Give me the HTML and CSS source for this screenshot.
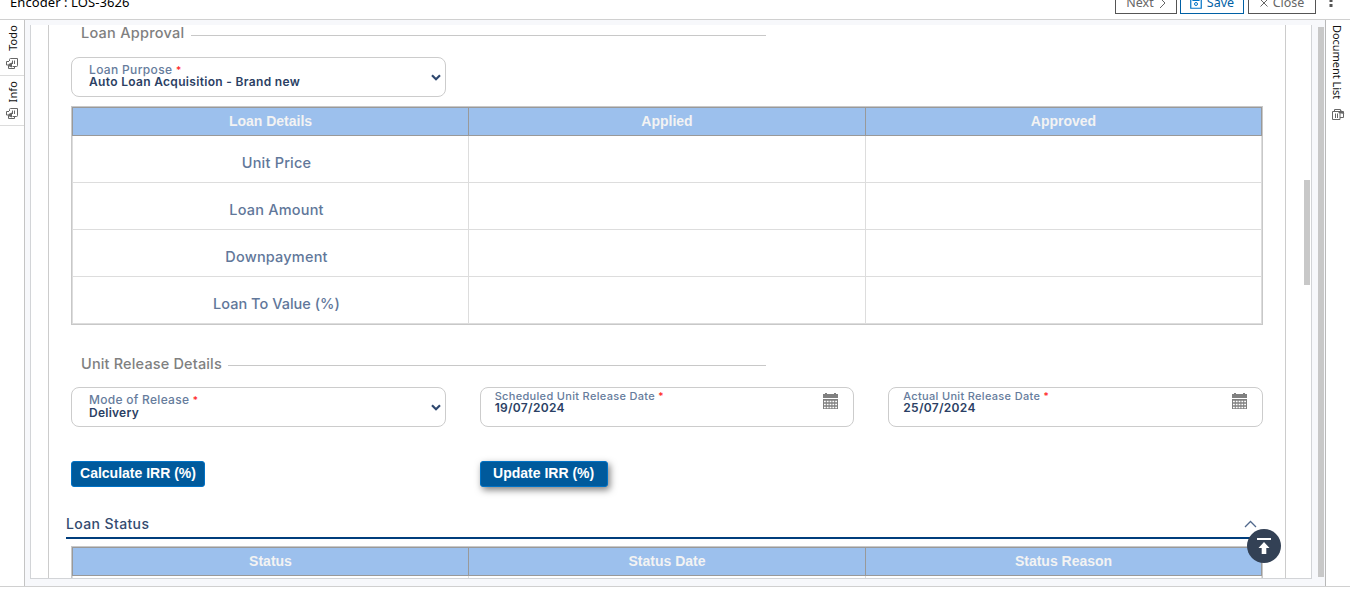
FILE: index.html
```html
<!DOCTYPE html>
<html lang="en">
<head>
<meta charset="utf-8">
<title>Encoder</title>
<link rel="stylesheet" href="styles.css">
</head>
<body>
<svg class="defs" width="0" height="0">
  <symbol id="docs" viewBox="0 0 13 11">
    <path d="M3.500 3V1.500a1 1 0 0 1 1-1h7v7a1 1 0 0 1-1 1h-4M6.500 2.500v3.500M8.500 2.500v3.500M8.500 8.500v2H2.500V8M3 3.500H.5V7h2" fill="none" stroke="#666"/>
    <path d="M2.500 6l3.500-1.500v5L2 8z" fill="#666"/>
  </symbol>
  <symbol id="calendar" viewBox="0 0 15 16">
    <path d="M0 1h2V0h2v1h7V0h2v1h2v4H0zM0 6h15v10H0z" fill="#808080"/>
    <path d="M1 8.500h13M1 11.500h13M1 14.500h13" stroke="#fff" stroke-width="1.300" stroke-dasharray="1.800 1"/>
  </symbol>
  <symbol id="chevron" viewBox="0 0 10 7">
    <path d="M1 1.200l4 4 4-4" fill="none" stroke="#2f486f" stroke-width="2.200"/>
  </symbol>
</svg>
<header class="topbar">
  <div class="case-title">Encoder : LOS-3626</div>
  <div class="actions">
    <button class="action next">Next <svg width="7" height="12" viewBox="0 0 7 12"><path d="M1 1l5 5-5 5" fill="none" stroke="#666"/></svg></button>
    <button class="action save"><svg width="12" height="12" viewBox="0 0 12 12"><path d="M.75.75h10.500v10.500H.75zM3 1v2.500h6V1" fill="none" stroke="#0072c6" stroke-width="1.200"/><circle cx="6" cy="7" r="1.500" fill="none" stroke="#0072c6"/></svg> Save</button>
    <button class="action close"><svg width="8" height="8" viewBox="0 0 8 8"><path d="M.5.500l7 7M7.500.500l-7 7" stroke="#666"/></svg> Close</button>
    <svg class="more" width="4" height="16" viewBox="0 0 4 16"><path d="M.5 1h3v3h-3zM.5 7h3v3h-3zM.5 12h3v3h-3z" fill="#555"/></svg>
  </div>
</header>
<main class="workspace">
  <aside class="rail left">
    <div class="tab"><span class="up">Todo</span><svg width="13" height="11"><use href="#docs"/></svg></div>
    <div class="tab info"><span class="up">Info</span><svg width="13" height="11"><use href="#docs"/></svg></div>
  </aside>
  <div class="stage">
    <section class="panel">
      <div class="form">
        <div class="legend first"><span class="l1">Loan Approval</span><i></i></div>
        <div class="fields">
          <div class="field select"><div><label class="f1">Loan Purpose <b>*</b></label><p class="v1">Auto Loan Acquisition - Brand new</p></div><svg width="10" height="7"><use href="#chevron"/></svg></div>
        </div>
        <div class="table loan">
          <div class="row head"><span>Loan Details</span><span>Applied</span><span>Approved</span></div>
          <div class="row"><span>Unit Price</span><span></span><span></span></div>
          <div class="row"><span>Loan Amount</span><span></span><span></span></div>
          <div class="row"><span>Downpayment</span><span></span><span></span></div>
          <div class="row"><span class="ltv">Loan To Value (%)</span><span></span><span></span></div>
        </div>
        <div class="legend second"><span class="l2">Unit Release Details</span><i></i></div>
        <div class="fields">
          <div class="field select mode"><div><label class="f2">Mode of Release <b>*</b></label><p class="v2">Delivery</p></div><svg width="10" height="7"><use href="#chevron"/></svg></div>
          <div class="field date"><div><label>Scheduled Unit Release Date <b>*</b></label><p>19/07/2024</p></div><svg width="15" height="16"><use href="#calendar"/></svg></div>
          <div class="field date"><div><label>Actual Unit Release Date <b>*</b></label><p>25/07/2024</p></div><svg width="15" height="16"><use href="#calendar"/></svg></div>
        </div>
        <div class="fields commands">
          <div><button class="primary calc">Calculate IRR (%)</button></div>
          <div><button class="primary update">Update IRR (%)</button></div>
        </div>
        <div class="section"><h2>Loan Status</h2><svg width="13" height="8" viewBox="0 0 13 8"><path d="M1 7l5.500-5.500L12 7" fill="none" stroke="#50688c" stroke-width="1.300"/></svg></div>
        <div class="table status">
          <div class="row head"><span>Status</span><span>Status Date</span><span>Status Reason</span></div>
          <div class="row"><span></span><span></span><span></span></div>
        </div>
      </div>
      <div class="thumb"></div>
      <button class="to-top" aria-label="Back to top"><svg width="14" height="16" viewBox="0 0 14 16"><path d="M0 0h14v2H0zM7 4l5.500 6H9.300v6H4.700v-6H1.500z" fill="#fff"/></svg></button>
    </section>
    <div class="scrollbar"></div>
  </div>
  <aside class="rail right"><span>Document List</span><svg width="13" height="11" viewBox="0 0 13 11"><path d="M.5 2.500h7.500v8H.5zM2.500 2V.500h6V2M3.500 4.500V9M5.500 4.500V9M8 8.500h3.500v-4M8 2.500h3.500v2" fill="none" stroke="#666"/><path d="M6 4l3-3 3.500 4z" fill="#666"/></svg></aside>
</main>
</body>
</html>
```
FILE: styles.css
```css
* { box-sizing: border-box; }
body { margin: 0; width: 1350px; height: 602px; overflow: hidden; background: #fff; font-family: "Noto Sans", sans-serif; }
p, h2 { margin: 0; }
button { font-family: inherit; margin: 0; padding: 0; }
.defs { position: absolute; }
svg { flex: none; }

.topbar { height: 20px; border-bottom: 1px solid #d0d0d0; display: flex; justify-content: space-between; overflow: hidden; padding-left: 10px; }
.case-title { font-size: 13px; line-height: 18px; margin-top: -7px; white-space: nowrap; letter-spacing: .08px; }
.actions { display: flex; gap: 3px; margin-top: -12px; padding-right: 17px; }
.action { display: flex; align-items: center; justify-content: center; gap: 5px; height: 26px; border: 1px solid #555; background: #fff; color: #666; font-size: 12.500px; line-height: 18px; padding-top: 4px; }
.next { width: 62px; }
.save { width: 64px; border-color: #0060a5; color: #0060a5; }
.close { width: 68px; margin-left: 1px; }
.more { margin: 4px 0 0 10px; align-self: flex-start; }

.workspace { height: 567px; display: flex; border-bottom: 1px solid #d0d0d0; }
.rail { flex: none; width: 25px; font-size: 11px; color: #111; }
.left { border-right: 1px solid #c4c4c4; }
.tab { display: flex; flex-direction: column; align-items: center; justify-content: flex-end; border-bottom: 1px solid #dcdcdc; padding-bottom: 6px; gap: 7px; height: 50px; }
.tab:first-child { height: 56px; }
.tab.info { gap: 6px; }
.up, .right span { writing-mode: vertical-rl; line-height: 14px; }
.up { transform: rotate(180deg); margin-left: 2px; letter-spacing: .1px; }
.right { border-left: 1px solid #b8b8b8; display: flex; flex-direction: column; align-items: center; padding-top: 5px; gap: 10px; }
.right span { margin-right: 3px; letter-spacing: -.05px; }

.stage { flex: 1; background: #f7f8fb; display: flex; padding: 5px 0 7px 5px; }
.panel { position: relative; width: 1282px; border: 1px solid #d2d4d7; border-top: 0; background: #fff; padding-left: 17px; overflow: hidden; }
.form { width: 1238px; height: 553px; border: solid #ccc; border-width: 0 1px; padding: 0 22px; overflow: hidden; }
.thumb { position: absolute; right: 1px; top: 155px; width: 6px; height: 105px; background: #c8c8c8; }
.scrollbar { width: 6px; margin: 2px 0 2px 6px; background: #c8c8c8; }

.legend { display: flex; align-items: center; gap: 7px; width: 695px; padding-left: 10px; height: 20px; font: 500 14.500px/20px Inter, sans-serif; color: #808080; white-space: nowrap; }
.legend i { flex: 1; height: 1px; background: #c8c8c8; margin-top: 3px; }
.first { margin: -2px 0 14px; }
.first i { margin-top: 4px; }
.second { margin: 29px 0 13px; }
.l1 { width: 103px; letter-spacing: .26px; }
.l2 { width: 140px; letter-spacing: .16px; }

.fields { display: grid; grid-template-columns: repeat(3, 1fr); gap: 34px; }
.field { height: 40px; border: 1px solid #ccc; border-radius: 8px; display: flex; justify-content: space-between; align-items: center; font: 500 12px/12px Inter, sans-serif; color: #667c9c; white-space: nowrap; padding: 0 4px 0 17px; }
.field b { color: #f22; font-weight: 500; font-size: 10px; line-height: 10px; letter-spacing: 0; }
.field label, .field p { display: block; }
.field p { color: #2b3f64; font-weight: 600; }
.f1 { letter-spacing: .34px; }
.f2 { letter-spacing: .28px; }
.v1 { letter-spacing: .32px; }
.v2 { letter-spacing: .25px; }
.select > div { padding-bottom: 3px; }
.mode > div { padding-bottom: 1px; }
.mode p { padding-top: 1px; }
.date { align-items: flex-start; padding: 2px 15px 0 14px; font-size: 11px; }
.date label { letter-spacing: .32px; }
.date p { font-size: 12px; line-height: 11px; letter-spacing: .3px; }
.date svg { margin-top: 3px; }

.table { border: 1px solid #c8c8c8; }
.loan { margin-top: 9px; }
.row { display: grid; grid-template-columns: 396px 397px 397px; grid-template-rows: 100%; height: 47px; border-bottom: 1px solid #ddd; border-right: 1px solid #ddd; font: 500 14.500px/54px Inter, sans-serif; letter-spacing: .2px; color: #61779a; text-align: center; }
.row span { border-left: 1px solid #ddd; padding-left: 12px; }
.row span:last-child { margin-right: 1px; }
.row .ltv { letter-spacing: .02px; }
.row.head { height: 29px; border: solid #999; border-width: 1px 1px 1px 0; background: #9cc0ed; color: #f3f3f3; font: bold 14px/27px "Liberation Sans", Arial, sans-serif; letter-spacing: 0; }
.row.head span { border-color: #999; padding-left: 0; }

.commands { margin-top: 34px; height: 26px; }
.primary { height: 26px; border: 1px solid #0072c6; border-radius: 3px; background: #005a9c; color: #fff; font: bold 14px/22px "Liberation Sans", Arial, sans-serif; display: block; white-space: nowrap; padding-bottom: 2px; }
.calc { width: 134px; }
.update { width: 128px; box-shadow: 2px 3px 7px rgba(0, 0, 0, .5); }
.section { display: flex; justify-content: space-between; align-items: center; margin: 24px 0 7px -5px; padding: 0 6px 1px 0; height: 28px; border-bottom: 2px solid #003d7c; }
.section h2 { font: 500 14px/20px Inter, sans-serif; letter-spacing: .38px; color: #344b70; padding-top: 1px; }
.to-top { position: absolute; left: 1216px; top: 504px; width: 34px; height: 34px; border: 0; border-radius: 50%; background: #334155; display: flex; align-items: center; justify-content: center; }
```
